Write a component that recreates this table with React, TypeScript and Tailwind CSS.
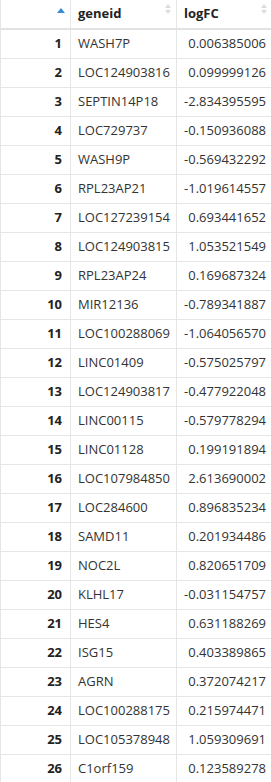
import React from "react";

const rows: [string, string][] = [
  ["WASH7P", "0.006385006"],
  ["LOC124903816", "0.099999126"],
  ["SEPTIN14P18", "-2.834395595"],
  ["LOC729737", "-0.150936088"],
  ["WASH9P", "-0.569432292"],
  ["RPL23AP21", "-1.019614557"],
  ["LOC127239154", "0.693441652"],
  ["LOC124903815", "1.053521549"],
  ["RPL23AP24", "0.169687324"],
  ["MIR12136", "-0.789341887"],
  ["LOC100288069", "-1.064056570"],
  ["LINC01409", "-0.575025797"],
  ["LOC124903817", "-0.477922048"],
  ["LINC00115", "-0.579778294"],
  ["LINC01128", "0.199191894"],
  ["LOC107984850", "2.613690002"],
  ["LOC284600", "0.896835234"],
  ["SAMD11", "0.201934486"],
  ["NOC2L", "0.820651709"],
  ["KLHL17", "-0.031154757"],
  ["HES4", "0.631188269"],
  ["ISG15", "0.403389865"],
  ["AGRN", "0.372074217"],
  ["LOC100288175", "0.215974471"],
  ["LOC105378948", "1.059309691"],
  ["C1orf159", "0.123589278"],
];

function SortBoth() {
  return (
    <svg width="6" height="10" viewBox="0 0 6 10" className="absolute right-[5px] top-[4px]">
      <path d="M0 4 L3 0 L6 4 Z" fill="#dcdcdc" />
      <path d="M0 6 L3 10 L6 6 Z" fill="#dcdcdc" />
    </svg>
  );
}

export default function App() {
  return (
    <div
      className="w-[271px] h-[782px] overflow-hidden bg-white text-[13px] text-[#333]"
      style={{ fontFamily: '"Open Sans", "Noto Sans", sans-serif' }}
    >
      <div className="grid grid-cols-[70px_106px_95px] border-l border-[#e6e6e6]">
        <div className="relative h-[30px] border-b-2 border-[#e2e2e2] border-r border-r-[#e6e6e6]">
          <svg width="8" height="5" viewBox="0 0 8 5" className="absolute left-[56px] top-[8px]">
            <path d="M0 5 L4 0 L8 5 Z" fill="#3a8ad6" />
          </svg>
        </div>
        <div className="relative h-[30px] border-b-2 border-[#e2e2e2] border-r border-r-[#e6e6e6] pl-[7px] flex items-center font-bold text-[#222]">
          geneid
          <SortBoth />
        </div>
        <div className="relative h-[30px] border-b-2 border-[#e2e2e2] pl-[7px] flex items-center font-bold text-[#222]">
          logFC
          <SortBoth />
        </div>
        {rows.map(([g, v], i) => (
          <React.Fragment key={i}>
            <div className="h-[29px] border-b border-[#e6e6e6] border-r border-r-[#e6e6e6] pr-[8px] flex items-center justify-end font-bold text-[#222]">
              {i + 1}
            </div>
            <div className="h-[29px] border-b border-[#e6e6e6] border-r border-r-[#e6e6e6] pl-[7px] flex items-center whitespace-nowrap">
              {g}
            </div>
            <div className="h-[29px] border-b border-[#e6e6e6] pr-[6px] flex items-center justify-end whitespace-nowrap">
              {v}
            </div>
          </React.Fragment>
        ))}
      </div>
    </div>
  );
}
